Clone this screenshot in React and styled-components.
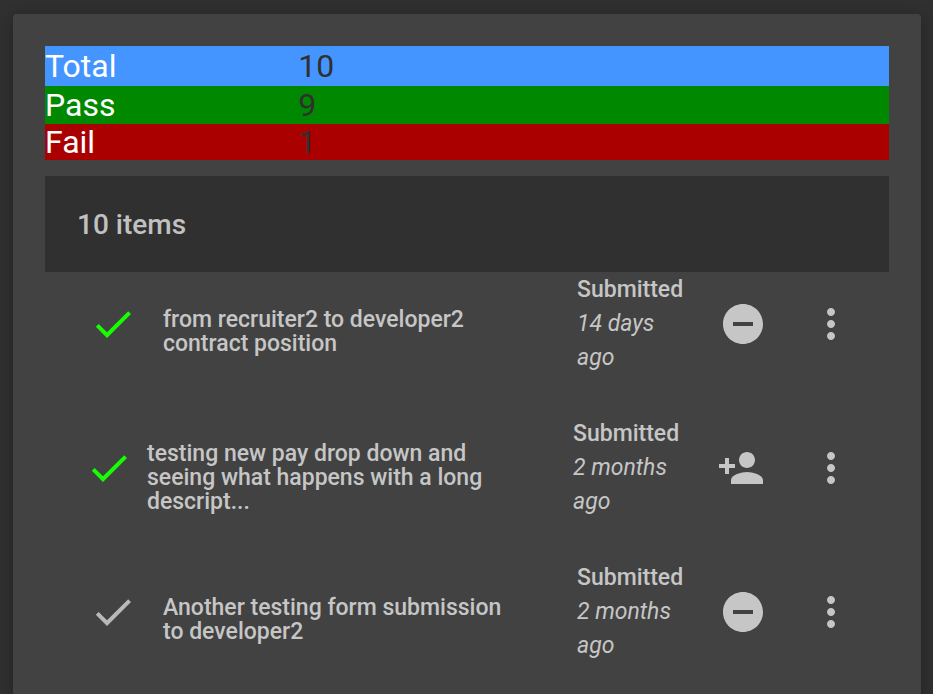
import React from "react";
import styled, { createGlobalStyle } from "styled-components";

const GlobalStyle = createGlobalStyle`
  * { box-sizing: border-box; }
  body {
    margin: 0;
    background: #303030;
    color: #c6c6c6;
    font-family: Roboto, "Liberation Sans", sans-serif;
  }
`;

const Page = styled.main`
  padding: 14px 12px 0 13px;
  height: 100vh;
  overflow: hidden;
`;

const Card = styled.section`
  min-height: 100%;
  padding: 32px;
  background: #424242;
  border-radius: 4px;
  box-shadow: 0 4px 16px rgba(0, 0, 0, 0.3);
`;

const Summary = styled.table`
  width: 100%;
  border-collapse: collapse;
  table-layout: fixed;
  font-size: 32px;
  line-height: 36px;
`;

const SummaryRow = styled.tr`
  height: ${(p) => p.$height}px;
  background: ${(p) => p.$color};
`;

const SummaryLabel = styled.th`
  width: 30%;
  padding: 0;
  text-align: left;
  font-weight: 400;
  color: #fff;
`;

const SummaryValue = styled.td`
  padding: 0;
  color: #303030;
`;

const ListHeader = styled.h2`
  display: flex;
  align-items: center;
  height: 96px;
  margin: 16px 0 0;
  padding: 0 32px;
  background: #303030;
  color: #c1c1c1;
  font-size: 28px;
  font-weight: 500;
`;

const List = styled.ul`
  display: flex;
  flex-direction: column;
  gap: 40px;
  margin: 0;
  padding: 0 32px 0 40px;
  list-style: none;
`;

const Item = styled.li`
  display: grid;
  grid-template-columns: ${(p) =>
    p.$compact ? "62px 1fr 144px 90px 50px" : "74px 1fr 142px 88px 50px"};
  align-items: center;
  min-height: 104px;
  padding-left: ${(p) => (p.$compact ? 0 : 4)}px;
`;

const Title = styled.h3`
  margin: 0;
  padding: ${(p) => (p.$compact ? 20 : 16)}px 60px 0 0;
  font-size: 23px;
  line-height: 24px;
  font-weight: 500;
`;

const Status = styled.div`
  font-size: 23px;
  line-height: 34px;
  font-weight: 500;
`;

const When = styled.em`
  display: block;
  width: 100px;
  font-weight: 400;
`;

const IconButton = styled.button`
  display: flex;
  justify-self: start;
  padding: 0;
  border: 0;
  background: none;
  color: inherit;
  cursor: pointer;
`;

const Icon = styled.svg`
  width: 48px;
  height: 48px;
  fill: ${(p) => p.$color || "currentColor"};
`;

const PATHS = {
  check: "M9 16.17L4.83 12l-1.42 1.41L9 19 21 7l-1.41-1.41z",
  remove: "M12 2C6.48 2 2 6.48 2 12s4.48 10 10 10 10-4.48 10-10S17.52 2 12 2zm5 11H7v-2h10v2z",
  add: "M15 12c2.21 0 4-1.79 4-4s-1.79-4-4-4-4 1.79-4 4 1.79 4 4 4zm-9-2V7H4v3H1v2h3v3h2v-3h3v-2H6zm9 4c-2.67 0-8 1.34-8 4v2h16v-2c0-2.66-5.33-4-8-4z",
  more: "M12 8c1.100 0 2-.9 2-2s-.9-2-2-2-2 .9-2 2 .9 2 2 2zm0 2c-1.100 0-2 .9-2 2s.9 2 2 2 2-.9 2-2-.9-2-2-2zm0 6c-1.100 0-2 .9-2 2s.9 2 2 2 2-.9 2-2-.9-2-2-2z",
};

const Glyph = ({ name, color }) => (
  <Icon viewBox="0 0 24 24" $color={color} aria-hidden="true">
    <path d={PATHS[name]} />
  </Icon>
);

const totals = [
  { label: "Total", value: 10, color: "#4495ff", height: 40 },
  { label: "Pass", value: 9, color: "#008800", height: 38 },
  { label: "Fail", value: 1, color: "#aa0000", height: 36 },
];

const items = [
  { title: "from recruiter2 to developer2 contract position", when: "14 days ago", check: "#15ff00", action: "remove" },
  { title: "testing new pay drop down and seeing what happens with a long descript...", when: "2 months ago", check: "#15ff00", action: "add", compact: true },
  { title: "Another testing form submission to developer2", when: "2 months ago", check: "#b9b9b9", action: "remove" },
];

export default function App() {
  return (
    <>
      <GlobalStyle />
      <Page>
        <Card>
          <Summary>
            <tbody>
              {totals.map((t) => (
                <SummaryRow key={t.label} $color={t.color} $height={t.height}>
                  <SummaryLabel scope="row">{t.label}</SummaryLabel>
                  <SummaryValue>{t.value}</SummaryValue>
                </SummaryRow>
              ))}
            </tbody>
          </Summary>
          <ListHeader>10 items</ListHeader>
          <List>
            {items.map((item) => (
              <Item key={item.title} $compact={item.compact}>
                <Glyph name="check" color={item.check} />
                <Title $compact={item.compact}>{item.title}</Title>
                <Status>
                  Submitted
                  <When>{item.when}</When>
                </Status>
                <IconButton type="button" aria-label={item.action === "add" ? "Add person" : "Remove"}>
                  <Glyph name={item.action} />
                </IconButton>
                <IconButton type="button" aria-label="More options">
                  <Glyph name="more" />
                </IconButton>
              </Item>
            ))}
          </List>
        </Card>
      </Page>
    </>
  );
}
